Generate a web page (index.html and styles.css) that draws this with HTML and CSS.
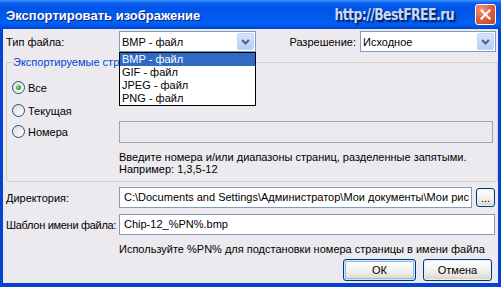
FILE: index.html
```html
<!DOCTYPE html>
<html lang="ru">
<head>
    <meta charset="UTF-8">
    <title>Экспортировать изображение</title>
    <link rel="stylesheet" href="styles.css">
</head>
<body>
    <div class="window">
        <div class="titlebar">
            <span class="title">Экспортировать изображение</span>
            <span class="watermark">http://BestFREE.ru</span>
            <span class="close-btn">
                <svg width="11" height="11" viewBox="0 0 11 11"><path d="M1.5 1.5 L9.5 9.5 M9.5 1.5 L1.5 9.5" stroke="#fff" stroke-width="2.2" stroke-linecap="square"/></svg>
            </span>
        </div>

        <div class="content">
            <div class="row top-row">
                <span class="lbl">Тип файла:</span>
                <div class="combo type-combo">
                    <span class="combo-text">BMP - файл</span>
                    <span class="combo-arrow">
                        <svg width="15" height="15" viewBox="0 0 15 15"><path d="M4 6 L7.5 9.5 L11 6" fill="none" stroke="#4D6185" stroke-width="2"/></svg>
                    </span>
                    <ul class="dropdown">
                        <li class="sel">BMP - файл</li>
                        <li>GIF - файл</li>
                        <li>JPEG - файл</li>
                        <li>PNG - файл</li>
                    </ul>
                </div>
                <span class="lbl res-lbl">Разрешение:</span>
                <div class="combo res-combo">
                    <span class="combo-text">Исходное</span>
                    <span class="combo-arrow">
                        <svg width="15" height="15" viewBox="0 0 15 15"><path d="M4 6 L7.5 9.5 L11 6" fill="none" stroke="#4D6185" stroke-width="2"/></svg>
                    </span>
                </div>
            </div>

            <fieldset class="group">
                <legend>Экспортируемые страницы</legend>
                <div class="radios">
                    <div class="radio-row"><span class="radio checked"></span>Все</div>
                    <div class="radio-row"><span class="radio"></span>Текущая</div>
                    <div class="radio-row numbers-row">
                        <div class="radio-label"><span class="radio"></span>Номера</div>
                        <div class="field disabled"></div>
                    </div>
                </div>
                <div class="hint">Введите номера и/или диапазоны страниц, разделенные запятыми.<br>Например: 1,3,5-12</div>
            </fieldset>

            <div class="row dir-row">
                <span class="lbl">Директория:</span>
                <div class="field dir-field">C:\Documents and Settings\Администратор\Мои документы\Мои рис</div>
                <span class="btn small-btn">...</span>
            </div>

            <div class="row name-row">
                <span class="lbl name-lbl">Шаблон имени файла:</span>
                <div class="field name-field">Chip-12_%PN%.bmp</div>
            </div>

            <div class="hint name-hint">Используйте %PN% для подстановки номера страницы в имени файла</div>

            <div class="buttons">
                <span class="btn default-btn ok-btn">ОК</span>
                <span class="btn cancel-btn">Отмена</span>
            </div>
        </div>
    </div>
</body>
</html>
```

FILE: styles.css
```css
* {
    box-sizing: border-box;
}

html, body {
    margin: 0;
    padding: 0;
}

body {
    font-family: "Liberation Sans", Arial, sans-serif;
    font-size: 11px;
    color: #000;
    background: #fff;
}

/* Окно */
.window {
    width: 501px;
    height: 287px;
    display: flex;
    flex-direction: column;
    background: #0842D4;
}

.titlebar {
    height: 29px;
    flex: none;
    display: flex;
    align-items: center;
    padding: 0 6px 0 6px;
    background: linear-gradient(#3D95FF 0, #0A5EF0 3px, #0054E6 8px, #0058EC 16px, #0062F6 23px, #0050E2 27px, #0040D0 29px);
}

.title {
    font-weight: bold;
    font-size: 13px;
    color: #fff;
    text-shadow: 1px 1px #0A1E80;
    padding-top: 1px;
}

.watermark {
    margin-left: auto;
    margin-right: 21px;
    font-family: "DejaVu Sans", sans-serif;
    font-stretch: condensed;
    font-weight: bold;
    font-size: 15px;
    color: #C9D9F2;
    text-shadow: 2px 2px 2px #001650;
    letter-spacing: -0.6px;
    transform: scaleX(0.92);
    transform-origin: right center;
}

.close-btn {
    width: 21px;
    height: 21px;
    margin-right: -1px;
    border: 1px solid #fff;
    border-radius: 3px;
    background: radial-gradient(circle at 30% 25%, #F09A7E 0, #E0623E 45%, #C5401A 100%);
    display: flex;
    align-items: center;
    justify-content: center;
}

/* Содержимое */
.content {
    flex: 1;
    margin: 0 3px 4px 3px;
    padding: 2px 0 0 3px;
    background: #ECEAEF;
    display: flex;
    flex-direction: column;
}

.row {
    display: flex;
    align-items: center;
}

.lbl {
    width: 113px;
    flex: none;
    white-space: nowrap;
}

.name-lbl {
    letter-spacing: -0.3px;
}

.combo {
    position: relative;
    height: 21px;
    border: 1px solid #7F9DB9;
    background: #fff;
    display: flex;
    align-items: center;
}

.type-combo {
    width: 137px;
}

.res-combo {
    width: 136px;
    margin-right: 2px;
}

.res-lbl {
    width: auto;
    margin-left: auto;
    margin-right: 4px;
}

.combo-text {
    flex: 1;
    padding-left: 2px;
}

.combo-arrow {
    width: 17px;
    height: 17px;
    margin-right: 1px;
    border: 1px solid #C3D3FD;
    border-radius: 2px;
    background: linear-gradient(#D8E4FD, #BACDF7);
    display: flex;
    align-items: center;
    justify-content: center;
}

.dropdown {
    position: absolute;
    left: -1px;
    top: 20px;
    width: 137px;
    margin: 0;
    padding: 0;
    list-style: none;
    border: 1px solid #000;
    background: #fff;
    z-index: 5;
}

.dropdown li {
    height: 13px;
    line-height: 13px;
    padding-left: 2px;
}

.dropdown .sel {
    background: #316AC5;
    color: #fff;
}

/* Группа */
.group {
    margin: 4px 0 0 0;
    padding: 0 0 6px 5px;
    border: 1px solid #D0D0BF;
    border-radius: 3px;
    min-width: 0;
}

.group legend {
    padding: 0 1px;
    line-height: 13px;
    color: #0046D5;
}

.radios {
    padding-top: 7px;
}

.radio-row {
    height: 23px;
    display: flex;
    align-items: center;
}

.numbers-row {
    margin-top: -2px;
}

.radio-label {
    width: 107px;
    display: flex;
    align-items: center;
}

.radio {
    width: 13px;
    height: 13px;
    margin-right: 3px;
    border: 1px solid #1C5180;
    border-radius: 50%;
    background: linear-gradient(135deg, #DCDCD7, #fff);
    position: relative;
}

.radio.checked::after {
    content: "";
    position: absolute;
    left: 3px;
    top: 3px;
    width: 5px;
    height: 5px;
    border-radius: 50%;
    background: radial-gradient(circle at 35% 35%, #8EE28E, #21A121 70%);
}

.field {
    height: 21px;
    border: 1px solid #7F9DB9;
    background: #fff;
    padding-left: 4px;
    line-height: 19px;
    white-space: nowrap;
    overflow: hidden;
}

.field.disabled {
    width: 374px;
    height: 22px;
    border-color: #A5A5A5;
    background: #ECEAEF;
}

.hint {
    margin: 8px 0 0 107px;
    line-height: 12px;
}

.dir-row {
    margin-top: 5px;
}

.dir-field {
    width: 353px;
}

.name-row {
    margin-top: 6px;
}

.name-field {
    width: 376px;
}

.name-hint {
    margin-left: 113px;
}

/* Кнопки */
.btn {
    display: flex;
    align-items: center;
    justify-content: center;
    border: 1px solid #003C74;
    border-radius: 3px;
    background: linear-gradient(#FFFFFF, #F3F3EE 50%, #E2DFD6 85%, #D6D0C5);
    box-shadow: inset 0 0 0 1px #E7EEF9;
}

.small-btn {
    width: 19px;
    height: 19px;
    margin-left: 4px;
    padding-bottom: 3px;
    align-items: flex-end;
    line-height: 9px;
}

.buttons {
    margin-top: 4px;
    display: flex;
    justify-content: flex-end;
    gap: 7px;
    padding-right: 6px;
}

.buttons .btn {
    height: 22px;
}

.ok-btn {
    width: 73px;
}

.cancel-btn {
    width: 69px;
}

.default-btn {
    box-shadow: inset 0 0 0 1px #CEE7FF, inset 0 0 0 2px #98B8EA;
}
```
